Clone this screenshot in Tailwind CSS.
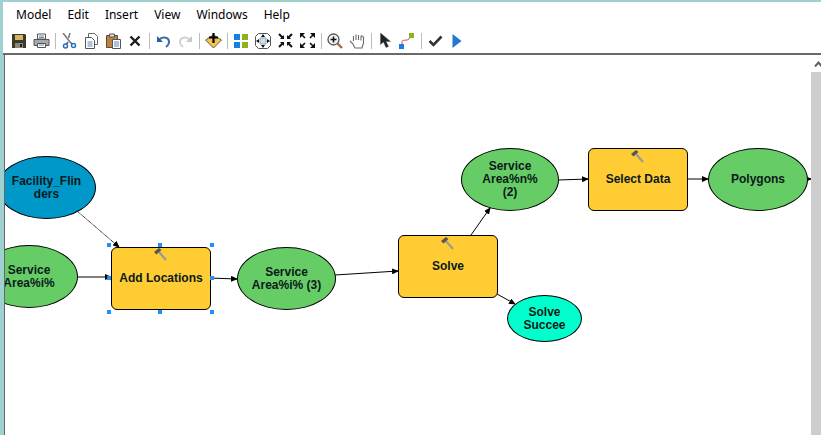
<!DOCTYPE html>
<html>
  <head>
    <meta charset="utf-8" />
    <title>ModelBuilder</title>
    <script src="https://cdn.jsdelivr.net/npm/@tailwindcss/browser@4"></script>
  </head>

  <body class="w-[821px] h-[435px] overflow-hidden bg-[#9fd1d0] font-['Liberation_Sans',sans-serif]">
    <div class="flex flex-col h-full pt-[2px]">
      <!-- menu -->
      <div class="h-[26px] ml-[3px] bg-white flex items-center gap-4 pl-[13px] text-[12px] text-black font-['Noto_Sans',sans-serif]">
        <span>Model</span>
        <span>Edit</span>
        <span>Insert</span>
        <span>View</span>
        <span>Windows</span>
        <span>Help</span>
      </div>

      <!-- toolbar -->
      <div class="h-[27px] ml-[3px] pl-[5px] bg-white border-b-2 border-[#696969] flex items-center">
        <div class="w-[22px] flex justify-center">
          <svg width="16" height="16" viewBox="0 0 16 16"><path d="M1 1h13l1 1v13H1z" fill="#3b3b2a"/><path d="M4 2h8v5H4z" fill="#d9b25f"/><path d="M4 10h8v5H4z" fill="#8a8a7c"/><path d="M9 11h2v3H9z" fill="#222"/></svg>
        </div>
        <div class="w-[22px] flex justify-center">
          <svg width="17" height="16" viewBox="0 0 17 16"><path d="M4.500 1h8v5h-8z" fill="#fff" stroke="#555"/><path d="M1 6.500h15v6H1z" fill="#a9a9a3" stroke="#555"/><path d="M4.500 10.500h8v4h-8z" fill="#fff" stroke="#555"/><path d="M6 3h5M6 4.500h5M6 12h5" stroke="#6f8fb5"/></svg>
        </div>
        <div class="w-[6px] flex justify-center"><div class="w-px h-[16px] bg-[#bbb]"></div></div>
        <div class="w-[22px] flex justify-center">
          <svg width="15" height="16" viewBox="0 0 15 16"><path d="M1 0l7 9M8 0L6.500 5" stroke="#777" stroke-width="1.500" fill="none"/><path d="M8 9l2 2" stroke="#2a5f9e" stroke-width="1.500"/><path d="M6 9l-1.500 2" stroke="#2a5f9e" stroke-width="1.500"/><circle cx="3.500" cy="13" r="2" fill="none" stroke="#2a6fb5" stroke-width="1.500"/><circle cx="11.500" cy="12.500" r="2" fill="none" stroke="#2a6fb5" stroke-width="1.500"/></svg>
        </div>
        <div class="w-[22px] flex justify-center">
          <svg width="15" height="16" viewBox="0 0 15 16"><path d="M4.500.5h6l3 3v8h-9z" fill="#fff" stroke="#666"/><path d="M1.500 4.500h6l3 3v8h-9z" fill="#fff" stroke="#555"/><path d="M3.500 9h5M3.500 11h5M3.500 13h5" stroke="#5f86b5"/></svg>
        </div>
        <div class="w-[22px] flex justify-center">
          <svg width="15" height="16" viewBox="0 0 15 16"><path d="M.5 2.500h11v12H.5z" fill="#b9814a" stroke="#6b4a2a"/><path d="M3.500 1h5v3h-5z" fill="#ddd" stroke="#555"/><path d="M6.500 6.500h8v9h-8z" fill="#fff" stroke="#555"/><path d="M8 9h5M8 11h5M8 13h5" stroke="#5f86b5"/></svg>
        </div>
        <div class="w-[22px] flex justify-center">
          <svg width="12" height="12" viewBox="0 0 12 12"><path d="M1.500 1.500l9 9M10.500 1.500l-9 9" stroke="#1c1c1c" stroke-width="2.400"/></svg>
        </div>
        <div class="w-[6px] flex justify-center"><div class="w-px h-[16px] bg-[#bbb]"></div></div>
        <div class="w-[22px] flex justify-center">
          <svg width="15" height="14" viewBox="0 0 15 14"><path d="M3 6C6 2 12 3 13 7c.4 2-.5 4-3 6" fill="none" stroke="#3b6ea8" stroke-width="2"/><path d="M1 2v6h6z" fill="#2a5f9e"/></svg>
        </div>
        <div class="w-[22px] flex justify-center">
          <svg width="15" height="14" viewBox="0 0 15 14"><path d="M12 6C9 2 3 3 2 7c-.4 2 .5 4 3 6" fill="none" stroke="#cfd3d6" stroke-width="2"/><path d="M14 2v6H8z" fill="#c4c8cc"/></svg>
        </div>
        <div class="w-[6px] flex justify-center"><div class="w-px h-[16px] bg-[#bbb]"></div></div>
        <div class="w-[22px] flex justify-center">
          <svg width="17" height="17" viewBox="0 0 17 17"><path d="M.5 8L8.500 3l8 5-8 8z" fill="#f2c25c" stroke="#6b5a30"/><path d="M8.500 1v10M4 5.500h9" stroke="#000" stroke-width="2.200"/></svg>
        </div>
        <div class="w-[6px] flex justify-center"><div class="w-px h-[16px] bg-[#bbb]"></div></div>
        <div class="w-[22px] flex justify-center">
          <svg width="14" height="14" viewBox="0 0 14 14"><path d="M0 0h6v6H0z" fill="#1c7fe0"/><path d="M8 0h6v6H8z" fill="#8cb21e"/><path d="M0 8h6v6H0z" fill="#1c7fe0"/><path d="M8 8h6v6H8z" fill="#8cb21e"/></svg>
        </div>
        <div class="w-[22px] flex justify-center">
          <svg width="16" height="16" viewBox="0 0 16 16"><path d="M.5 3.500l3-3h9l3 3v9l-3 3h-9l-3-3z" fill="#fff" stroke="#555"/><path d="M5 5h6v6H5z" fill="#cfe0ee" stroke="#8aa"/><path d="M8 1l2 3H6zM8 15l-2-3h4zM1 8l3-2v4zM15 8l-3 2V6z" fill="#111"/></svg>
        </div>
        <div class="w-[22px] flex justify-center">
          <svg width="15" height="15" viewBox="0 0 15 15"><path d="M1 1l4 4M14 1l-4 4M1 14l4-4M14 14l-4-4" stroke="#111" stroke-width="2"/><path d="M6 6H2l4-4zM9 6h4L9 2zM6 9H2l4 4zM9 9h4l-4 4z" fill="#111"/></svg>
        </div>
        <div class="w-[22px] flex justify-center">
          <svg width="15" height="15" viewBox="0 0 15 15"><path d="M2 2l3 3M13 2l-3 3M2 13l3-3M13 13l-3-3" stroke="#111" stroke-width="1.600"/><path d="M0 0h5L0 5zM15 0h-5l5 5zM0 15h5l-5-5zM15 15h-5l5-5z" fill="#111"/></svg>
        </div>
        <div class="w-[6px] flex justify-center"><div class="w-px h-[16px] bg-[#bbb]"></div></div>
        <div class="w-[22px] flex justify-center">
          <svg width="16" height="16" viewBox="0 0 16 16"><circle cx="6.500" cy="6.500" r="5.500" fill="#f4f4f4" stroke="#555" stroke-width="1.300"/><path d="M6.500 3.500v6M3.500 6.500h6" stroke="#111" stroke-width="1.600"/><path d="M10.500 10.500l4.500 4.500" stroke="#a8683a" stroke-width="2.400"/></svg>
        </div>
        <div class="w-[22px] flex justify-center">
          <svg width="16" height="16" viewBox="0 0 16 16"><path d="M1 8l3 3 2 4h7l1.500-5V4M4.500 8V3M7 7V1.500M9.500 7V2M12 7.500V3M14.500 5c0-2-2.500-3-2.500-1" fill="#fff" stroke="#6a6a6a" stroke-width="1.100"/></svg>
        </div>
        <div class="w-[6px] flex justify-center"><div class="w-px h-[16px] bg-[#bbb]"></div></div>
        <div class="w-[22px] flex justify-center">
          <svg width="11" height="15" viewBox="0 0 11 15"><path d="M.5 0v11.500L3.500 9l2.500 5.500 2.500-1L6 8.500h4.500z" fill="#222" stroke="#555" stroke-width=".5"/></svg>
        </div>
        <div class="w-[22px] flex justify-center">
          <svg width="16" height="16" viewBox="0 0 16 16"><path d="M3 11V8.500c0-2 5-.5 7-2.500l1-2" fill="none" stroke="#d0484f"/><path d="M0 11h5v5H0z" fill="#1c7fe0"/><path d="M10 0h5v5h-5z" fill="#8cb21e"/></svg>
        </div>
        <div class="w-[6px] flex justify-center"><div class="w-px h-[16px] bg-[#bbb]"></div></div>
        <div class="w-[22px] flex justify-center">
          <svg width="15" height="12" viewBox="0 0 15 12"><path d="M1.500 6l4 4 8-8.500" fill="none" stroke="#333" stroke-width="2.600"/></svg>
        </div>
        <div class="w-[22px] flex justify-center">
          <svg width="10" height="14" viewBox="0 0 10 14"><path d="M.5 0L9.500 7 .5 14z" fill="#1f78d1"/></svg>
        </div>
      </div>

      <!-- model canvas -->
      <div class="flex-1 ml-[1px] flex min-h-0 bg-white">
        <div class="w-[3px] bg-[#9fd1d0]"></div>
        <div class="relative w-[807px] bg-white border-l border-[#666] overflow-hidden text-[12px] leading-[13px] font-bold text-[#0b1a1a]">
          <svg class="absolute left-[-5px] top-[-55px]" width="821" height="435" viewBox="0 0 821 435">
            <defs>
              <marker id="tip" markerWidth="7" markerHeight="6" refX="6" refY="3" orient="auto" markerUnits="userSpaceOnUse">
                <path d="M0 0L7 3 0 6z" fill="#000"/>
              </marker>
            </defs>
            <g stroke="#000" stroke-width="1" fill="none" marker-end="url(#tip)">
              <path d="M77 211L119 247" stroke-dasharray="1 .6" marker-end="url(#tip)"/>
              <path d="M77 277H111" marker-end="url(#tip)"/>
              <path d="M210 278L237 279" marker-end="url(#tip)"/>
              <path d="M335 275L398 271" marker-end="url(#tip)"/>
              <path d="M471 235L490 208" marker-end="url(#tip)"/>
              <path d="M497 294L515 304" marker-end="url(#tip)"/>
              <path d="M558 180L588 179" marker-end="url(#tip)"/>
              <path d="M687 179H708" marker-end="url(#tip)"/>
              <path d="M807 179H811"/>
            </g>
          </svg>

          <div class="absolute left-[-8px] top-[101px] w-[99px] h-[63px] rounded-[50%] border border-black bg-[#0097c9] flex items-center justify-center text-center">Facility_Flin<br />ders</div>
          <div class="absolute left-[-25px] top-[190px] w-[98px] h-[63px] rounded-[50%] border border-black bg-[#66cc66] flex items-center justify-center text-center">Service<br />Area%i%</div>
          <div class="absolute left-[232px] top-[192px] w-[99px] h-[63px] rounded-[50%] border border-black bg-[#66cc66] flex items-center justify-center text-center">Service<br />Area%i% (3)</div>
          <div class="absolute left-[456px] top-[93px] w-[98px] h-[63px] rounded-[50%] border border-black bg-[#66cc66] flex items-center justify-center text-center">Service<br />Area%n%<br />(2)</div>
          <div class="absolute left-[703px] top-[93px] w-[100px] h-[63px] rounded-[50%] border border-black bg-[#66cc66] flex items-center justify-center text-center">Polygons</div>
          <div class="absolute left-[502px] top-[240px] w-[75px] h-[47px] rounded-[50%] border border-black bg-[#00ffcc] flex items-center justify-center text-center">Solve<br />Succee</div>

          <div class="absolute left-[106px] top-[192px] w-[100px] h-[63px] rounded-[6px] border border-black bg-[#ffcc33] flex items-center justify-center text-center">Add Locations</div>
          <div class="absolute left-[393px] top-[180px] w-[100px] h-[63px] rounded-[6px] border border-black bg-[#ffcc33] flex items-center justify-center text-center">Solve</div>
          <div class="absolute left-[583px] top-[93px] w-[100px] h-[63px] rounded-[6px] border border-black bg-[#ffcc33] flex items-center justify-center text-center">Select Data</div>

          <!-- tool hammers -->
          <svg class="absolute left-[148px] top-[192px]" width="14" height="14" viewBox="0 0 14 14"><path d="M6 5l7 8" stroke="#9a9a9a" stroke-width="2.200"/><path d="M1 5l5-4 2.500 2-5 4.500z" fill="#555"/></svg>
          <svg class="absolute left-[435px] top-[181px]" width="14" height="14" viewBox="0 0 14 14"><path d="M6 5l7 8" stroke="#9a9a9a" stroke-width="2.200"/><path d="M1 5l5-4 2.500 2-5 4.500z" fill="#555"/></svg>
          <svg class="absolute left-[625px] top-[94px]" width="14" height="14" viewBox="0 0 14 14"><path d="M6 5l7 8" stroke="#9a9a9a" stroke-width="2.200"/><path d="M1 5l5-4 2.500 2-5 4.500z" fill="#555"/></svg>

          <!-- selection handles -->
          <div class="absolute left-[102px] top-[188px] w-[4px] h-[4px] bg-[#1e90ff]"></div>
          <div class="absolute left-[153px] top-[188px] w-[4px] h-[4px] bg-[#1e90ff]"></div>
          <div class="absolute left-[205px] top-[188px] w-[4px] h-[4px] bg-[#1e90ff]"></div>
          <div class="absolute left-[102px] top-[221px] w-[4px] h-[4px] bg-[#1e90ff]"></div>
          <div class="absolute left-[205px] top-[221px] w-[4px] h-[4px] bg-[#1e90ff]"></div>
          <div class="absolute left-[102px] top-[255px] w-[4px] h-[4px] bg-[#1e90ff]"></div>
          <div class="absolute left-[153px] top-[255px] w-[4px] h-[4px] bg-[#1e90ff]"></div>
          <div class="absolute left-[205px] top-[255px] w-[4px] h-[4px] bg-[#1e90ff]"></div>
        </div>
        <!-- scrollbar, mostly off the window -->
        <div class="flex-1 flex flex-col overflow-hidden">
          <svg class="mt-[6px] ml-[3px] shrink-0" width="9" height="6" viewBox="0 0 9 6"><path d="M1 5.500L4.500 1.500 8 5.500" fill="none" stroke="#606060" stroke-width="2"/></svg>
          <div class="mt-[5px] flex-1 bg-[#cdcdcd]"></div>
        </div>
      </div>
    </div>
  </body>
</html>
